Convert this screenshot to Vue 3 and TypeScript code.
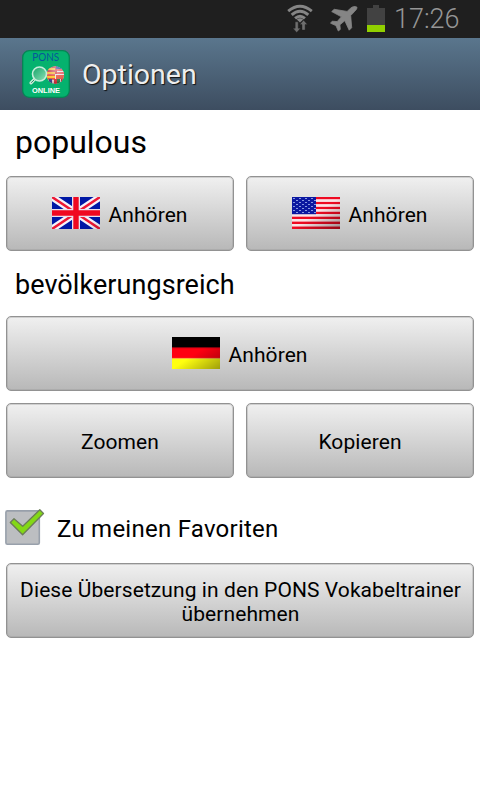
<script setup lang="ts">
import { ref } from 'vue'

const word = 'populous'
const translation = 'bevölkerungsreich'
const favourite = ref(true)

const rays = Array.from({ length: 13 }, (_, i) => i)
const stars = Array.from({ length: 32 }, (_, i) => ({
  x: 1 + (i % 4) * 6 + (Math.floor(i / 4) % 2) * 3,
  y: 1 + Math.floor(i / 4) * 2,
}))
</script>

<template>
  <div class="screen">
    <header class="status">
      <svg class="wifi" width="28" height="30" viewBox="0 0 28 30">
        <g fill="none" stroke="#858585" stroke-width="2.9">
          <path d="M1.2 8.2Q13 -1.6 24.8 8.2" />
          <path d="M4.7 11.9Q13 4.6 21.3 11.9" />
          <path d="M8.1 15.4Q13 10.9 17.9 15.4" />
        </g>
        <path d="M9.8 16.6Q13 14 16.2 16.6L13 19.6z" fill="#858585" />
        <path d="M8.2 18.8h3v6.4h2.3l-3.8 4.3-3.8-4.3h2.3zM15 27v-5.4h-2.2l3.8-4.4 3.8 4.4h-2.3V27z" fill="#6e6e6e" stroke="#1f1f1f" stroke-width=".4" />
      </svg>
      <svg class="plane" width="28" height="26" viewBox="0 0 28 26">
        <path d="M26.8 1C25-.2 22.4.5 20.5 2.3L17.1 5.4 4.2 3.3 1.7 5.6 11.4 10.8 7.2 15.6 2.2 15.2.5 17.2 5.9 19.6 8.3 25 10.3 23.4 9.9 18.8 14.8 14.7 19.2 24.2 21.7 21.7 20.7 9.6 24.6 5.4C26.3 3.7 27.4 2.2 26.8 1z" fill="#858585" stroke="#858585" stroke-width=".8" stroke-linejoin="round" />
      </svg>
      <svg class="battery" width="18" height="27" viewBox="0 0 18 27">
        <path d="M0 3h6V0h6v3h6v24H0z" fill="#424242" />
        <path d="M0 20h18v7H0z" fill="#91d000" />
      </svg>
      <span class="clock">17:26</span>
    </header>

    <div class="titlebar">
      <svg class="logo" width="48" height="48" viewBox="0 0 48 48">
        <defs>
          <clipPath id="globe"><circle cx="33.3" cy="25" r="8.8" /></clipPath>
          <radialGradient id="shine" cx=".5" cy=".2" r=".8">
            <stop offset="0" stop-color="#fff" stop-opacity=".45" />
            <stop offset=".55" stop-color="#fff" stop-opacity=".08" />
            <stop offset="1" stop-color="#400" stop-opacity=".3" />
          </radialGradient>
          <linearGradient id="lens" x1="0" y1="0" x2="1" y2="1">
            <stop offset="0" stop-color="#14a468" />
            <stop offset="1" stop-color="#8ee0b8" />
          </linearGradient>
        </defs>
        <rect x=".7" y=".7" width="46.6" height="46.6" rx="6.5" fill="#05b26e" stroke="#078354" stroke-width="1.3" />
        <text class="brand" x="10.2" y="11.3" textLength="27" lengthAdjust="spacingAndGlyphs">PONS</text>
        <g clip-path="url(#globe)">
          <rect x="24" y="16" width="19" height="19" fill="#e9e4e6" />
          <path d="M24 16h11v8H24z" fill="#c9404c" />
          <path d="M24 19h9M24 23h9" stroke="#f3b93e" stroke-width="2.2" />
          <path d="M34 16h9v3h-9z" fill="#3b4da0" />
          <path d="M34 20h9M34 23h9" stroke="#e23b42" stroke-width="1.5" />
          <path d="M24 25h9v4h-9z" fill="#ffc928" />
          <path d="M24 25h9M24 29h9" stroke="#df2b31" stroke-width="1.5" />
          <path d="M34 25h9v4h-9z" fill="#e65a46" />
          <path d="M27 29h3v6h-3z" fill="#264298" />
          <path d="M32 29h3v6h-3z" fill="#d92634" />
          <path d="M35 29h3v6h-3z" fill="#168747" />
          <path d="M39 29h4v6h-4z" fill="#cf2330" />
        </g>
        <circle cx="33.3" cy="25" r="8.8" fill="url(#shine)" />
        <path d="M13.2 28.5L9 32.8" stroke="#d1eadc" stroke-width="3.2" stroke-linecap="round" />
        <path d="M13 29L9.2 32.7" stroke="#2b9367" stroke-width="1" />
        <circle cx="17.5" cy="24" r="7" fill="url(#lens)" stroke="#c8eddb" stroke-width="1.6" />
        <text class="online" x="10" y="43" textLength="28" lengthAdjust="spacingAndGlyphs">ONLINE</text>
      </svg>
      <h1>Optionen</h1>
    </div>

    <main>
      <h2 class="word">{{ word }}</h2>
      <div class="row listen">
        <button>
          <svg class="flag" width="48" height="32" viewBox="0 0 48 32">
            <defs>
              <linearGradient id="shade" x1="0" y1="0" x2="1" y2="1">
                <stop offset=".5" stop-color="#000" stop-opacity="0" />
                <stop offset="1" stop-color="#000" stop-opacity=".38" />
              </linearGradient>
            </defs>
            <rect width="48" height="32" fill="#0018a5" />
            <path d="M0 0L48 32M48 0L0 32" stroke="#f5f3fa" stroke-width="7" />
            <path d="M0 0L48 32M48 0L0 32" stroke="#ed1834" stroke-width="2.5" />
            <path d="M24 0v32M0 16h48" stroke="#e9dfec" stroke-width="8" />
            <path d="M24 0v32M0 16h48" stroke="#f00820" stroke-width="5.4" />
            <rect x="27" y="18" width="21" height="14" fill="url(#shade)" opacity=".35" />
          </svg>
          <span>Anhören</span>
        </button>
        <button>
          <svg class="flag" width="48" height="32" viewBox="0 0 48 32">
            <rect width="48" height="32" fill="#fff" />
            <rect v-for="i in rays" :key="i" x="0" :y="i * 2.46" width="48" height="2.46" :fill="i % 2 ? '#f9e4e7' : '#ef0a22'" />
            <rect width="24" height="17.2" fill="#0b18a0" />
            <rect v-for="(s, i) in stars" :key="'s' + i" :x="s.x" :y="s.y" width="2" height="1" fill="#8898e3" />
            <rect width="48" height="32" fill="url(#shade)" />
          </svg>
          <span>Anhören</span>
        </button>
      </div>

      <h2 class="translation">{{ translation }}</h2>
      <div class="row">
        <button>
          <svg class="flag" width="48" height="32" viewBox="0 0 48 32">
            <rect width="48" height="11" fill="#000" />
            <rect y="10.5" width="48" height="11" fill="#ff0011" />
            <rect y="21.3" width="48" height="10.7" fill="#ffff10" />
            <path d="M0 10.7h48" stroke="#8a0010" stroke-width=".8" />
            <path d="M0 21.4h48" stroke="#ffa04a" stroke-width=".8" />
            <rect width="48" height="32" fill="url(#shade)" />
          </svg>
          <span>Anhören</span>
        </button>
      </div>
      <div class="row actions">
        <button><span>Zoomen</span></button>
        <button><span>Kopieren</span></button>
      </div>

      <div class="favourite" role="checkbox" :aria-checked="favourite" @click="favourite = !favourite">
        <svg width="42" height="40" viewBox="0 0 42 40">
          <rect x=".9" y="3.9" width="33.4" height="33.4" rx="1.5" fill="#bcbec1" stroke="#98a0ab" stroke-width="1.6" />
          <path v-if="favourite" d="M5.3 15.5L9 11.8 17.7 19.3 34.8 2.8 38.5 6.5 17.6 27.8z" fill="#83d816" stroke="#6b7c58" stroke-width="1.3" stroke-linejoin="round" />
        </svg>
        <span>Zu meinen Favoriten</span>
      </div>

      <div class="row">
        <button class="trainer"><span>Diese Übersetzung in den PONS Vokabeltrainer<br />übernehmen</span></button>
      </div>
    </main>
  </div>
</template>

<style>
body {
  background: #fff;
}
</style>

<style scoped>
.screen {
  width: 480px;
  height: 800px;
  overflow: hidden;
  background: #fff;
  font-family: Roboto, "Liberation Sans", sans-serif;
  color: #000;
}

.status {
  display: flex;
  justify-content: flex-end;
  box-sizing: border-box;
  height: 38px;
  padding-right: 20px;
  background: #1f1f1f;
}

.wifi {
  margin: 3px 15px 0 0;
}

.plane {
  margin: 6px 9px 0 0;
}

.battery {
  margin: 5px 9px 0 0;
}

.clock {
  width: 66px;
  color: #969696;
  font-size: 27px;
  font-weight: 300;
  line-height: 38px;
}

.titlebar {
  display: flex;
  align-items: center;
  height: 72px;
  padding-left: 22px;
  background: linear-gradient(#5a768d, #3d4d60);
}

.logo {
  margin-right: 12px;
}

.brand {
  fill: #07579a;
  font: 400 11.5px Lato, sans-serif;
}

.online {
  fill: #fff;
  font: 700 7px "Liberation Sans", sans-serif;
}

h1,
h2 {
  margin: 0;
  font-weight: 400;
}

h1 {
  padding-top: 2px;
  color: #eee;
  font-size: 28.5px;
  line-height: 36px;
  text-shadow: 1px 1px 1px #111;
}

main {
  padding: 0 6px;
}

.word {
  height: 66px;
  padding-left: 9px;
  font-size: 32px;
  line-height: 64px;
}

.translation {
  height: 65px;
  padding-left: 9px;
  font-size: 27px;
  line-height: 68px;
  letter-spacing: 0.06px;
}

.row {
  display: flex;
  gap: 12px;
}

.actions {
  margin-top: 12px;
}

button {
  display: flex;
  flex: 1;
  align-items: center;
  justify-content: center;
  gap: 8px;
  box-sizing: border-box;
  height: 75px;
  padding: 0;
  border: 1px solid #929292;
  border-radius: 5px;
  background: linear-gradient(#f0f0f0, #b8b8b8);
  box-shadow: inset 0 0 0 1px rgba(150, 150, 150, 0.35);
  color: #000;
  font-family: inherit;
  font-size: 21px;
  line-height: 24px;
  letter-spacing: 0.08px;
}

button span {
  padding-top: 2px;
}

.trainer span {
  padding-left: 1px;
}

.flag {
  flex: none;
  margin-bottom: 2px;
}

.favourite {
  display: flex;
  align-items: center;
  height: 85px;
  margin-left: -1px;
  font-size: 24px;
  letter-spacing: 0.25px;
}

.favourite svg {
  margin: 13px 10px 0 0;
}

.favourite span {
  margin-top: 17px;
}
</style>
